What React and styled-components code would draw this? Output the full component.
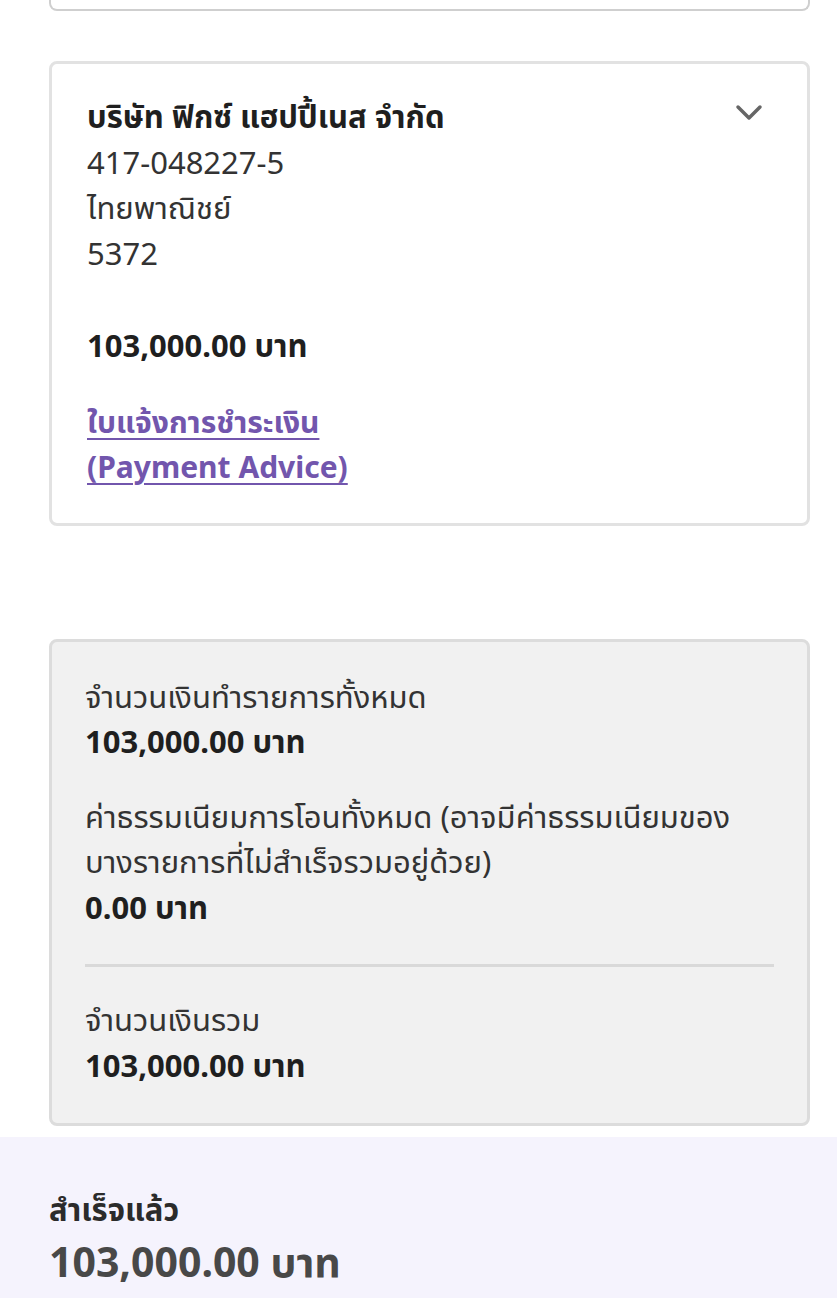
import React from 'react';
import styled, { createGlobalStyle } from 'styled-components';

const GlobalStyle = createGlobalStyle`
  html, body {
    margin: 0;
    padding: 0;
    background: #ffffff;
  }
  body {
    font-family: "Noto Sans", "Noto Sans Thai", "Noto Sans CJK SC", sans-serif;
    color: #222222;
  }
`;

const Page = styled.div`
  width: 837px;
  height: 1298px;
  overflow: hidden;
  display: flex;
  flex-direction: column;
`;

const Content = styled.div`
  flex: 1;
  padding: 0 27px 0 49px;
  display: flex;
  flex-direction: column;
`;

const TopCardEdge = styled.div`
  height: 9px;
  margin-top: -20px;
  padding-top: 20px;
  border: 2px solid #cfcfcf;
  border-top: none;
  border-radius: 0 0 8px 8px;
  box-sizing: content-box;
`;

const Card = styled.div`
  position: relative;
  margin-top: ${p => p.$top}px;
  border: 3px solid ${p => (p.$grey ? '#dcdcdc' : '#e2e2e2')};
  border-radius: 8px;
  background: ${p => (p.$grey ? '#f1f1f1' : '#ffffff')};
  padding: ${p => p.$pad};
  display: flex;
  flex-direction: column;
`;

const Chevron = styled.svg`
  position: absolute;
  top: 40px;
  right: 44px;
`;

const Text = styled.div`
  font-size: 31px;
  line-height: 45.5px;
  font-weight: ${p => (p.$bold ? 700 : 400)};
  color: ${p => (p.$bold ? '#1f1f1f' : '#333333')};
  margin-top: ${p => p.$mt || 0}px;
`;

const Link = styled.a`
  font-size: 30px;
  line-height: 45px;
  font-weight: 700;
  color: #7256ad;
  text-decoration: underline;
  text-underline-offset: 5px;
  text-decoration-thickness: 2px;
  margin-top: ${p => p.$mt || 0}px;
  display: block;
`;

const Divider = styled.hr`
  border: none;
  height: 3px;
  background: #d9d9d9;
  margin: 34px 0 30px;
`;

const Footer = styled.div`
  height: 163px;
  margin-top: 11px;
  background: #f5f3fd;
  padding: 50px 49px 0;
  box-sizing: border-box;
  display: flex;
  flex-direction: column;
`;

const Status = styled.div`
  font-size: 31px;
  line-height: 45px;
  font-weight: 700;
  color: #2b2b2b;
`;

const Total = styled.div`
  font-size: 41px;
  line-height: 54px;
  font-weight: 700;
  color: #484848;
  margin-top: 2px;
`;

export default function App() {
  return (
    <Page>
      <GlobalStyle />
      <Content>
        <TopCardEdge />
        <Card $top={50} $pad="30px 35px 34px 35px">
          <Chevron width="28" height="18" viewBox="0 0 28 18">
            <path d="M3 3 L14 14 L25 3" fill="none" stroke="#666" strokeWidth="3.5" strokeLinecap="round" strokeLinejoin="round" />
          </Chevron>
          <Text $bold>บริษัท ฟิกซ์ แฮปปี้เนส จำกัด</Text>
          <Text>417-048227-5</Text>
          <Text>ไทยพาณิชย์</Text>
          <Text>5372</Text>
          <Text $bold $mt={47}>103,000.00 บาท</Text>
          <Link href="#" $mt={30}>ใบแจ้งการชำระเงิน</Link>
          <Link href="#">(Payment Advice)</Link>
        </Card>
        <Card $top={113} $grey $pad="32px 33px 35px 33px">
          <Text>จำนวนเงินทำรายการทั้งหมด</Text>
          <Text $bold>103,000.00 บาท</Text>
          <Text $mt={29}>ค่าธรรมเนียมการโอนทั้งหมด (อาจมีค่าธรรมเนียมของบางรายการที่ไม่สำเร็จรวมอยู่ด้วย)</Text>
          <Text $bold>0.00 บาท</Text>
          <Divider />
          <Text>จำนวนเงินรวม</Text>
          <Text $bold>103,000.00 บาท</Text>
        </Card>
      </Content>
      <Footer>
        <Status>สำเร็จแล้ว</Status>
        <Total>103,000.00 บาท</Total>
      </Footer>
    </Page>
  );
}
